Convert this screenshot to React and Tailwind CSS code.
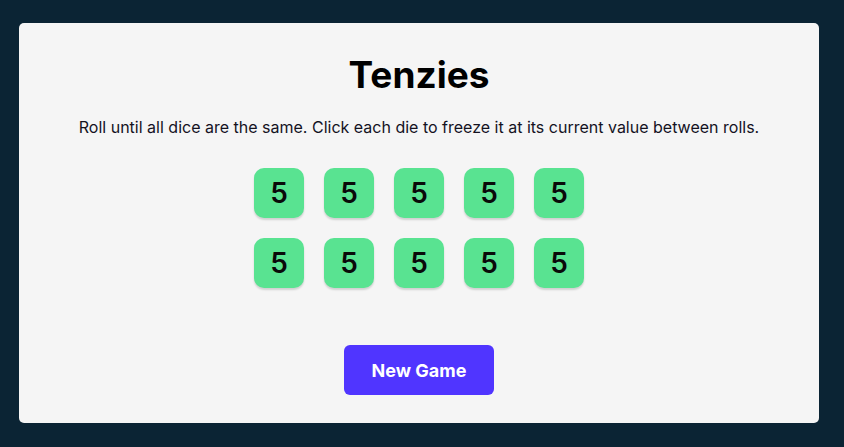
const DICE = Array.from({ length: 10 }, (_, i) => ({ id: i, value: 5, held: false }));

function Die({ value }) {
    return (
        <button className="w-[50px] h-[50px] rounded-[10px] bg-[#59E391] shadow-[0_2px_2px_rgba(0,0,0,0.15)] flex items-center justify-center text-[28px] font-semibold text-[#0a0a0a]">
            {value}
        </button>
    );
}

export default function App() {
    return (
        <div className="w-[844px] h-[447px] bg-[#0B2434] pt-[23px] pl-[19px] font-['Inter',sans-serif]">
            <main className="w-[800px] h-[400px] bg-[#F5F5F5] rounded-[5px] flex flex-col items-center">
                <h1 className="mt-[28px] text-[37px] leading-[48px] font-bold text-black">Tenzies</h1>
                <p className="mt-[18px] text-[16px] leading-[20px] text-[#14121f]">
                    Roll until all dice are the same. Click each die to freeze it at its current value between rolls.
                </p>
                <div className="mt-[31px] grid grid-cols-5 gap-5">
                    {DICE.map(d => <Die key={d.id} value={d.value} />)}
                </div>
                <button className="mt-[57px] w-[150px] h-[50px] rounded-[6px] bg-[#5035FF] text-white text-[18px] font-bold">
                    New Game
                </button>
            </main>
        </div>
    );
}
